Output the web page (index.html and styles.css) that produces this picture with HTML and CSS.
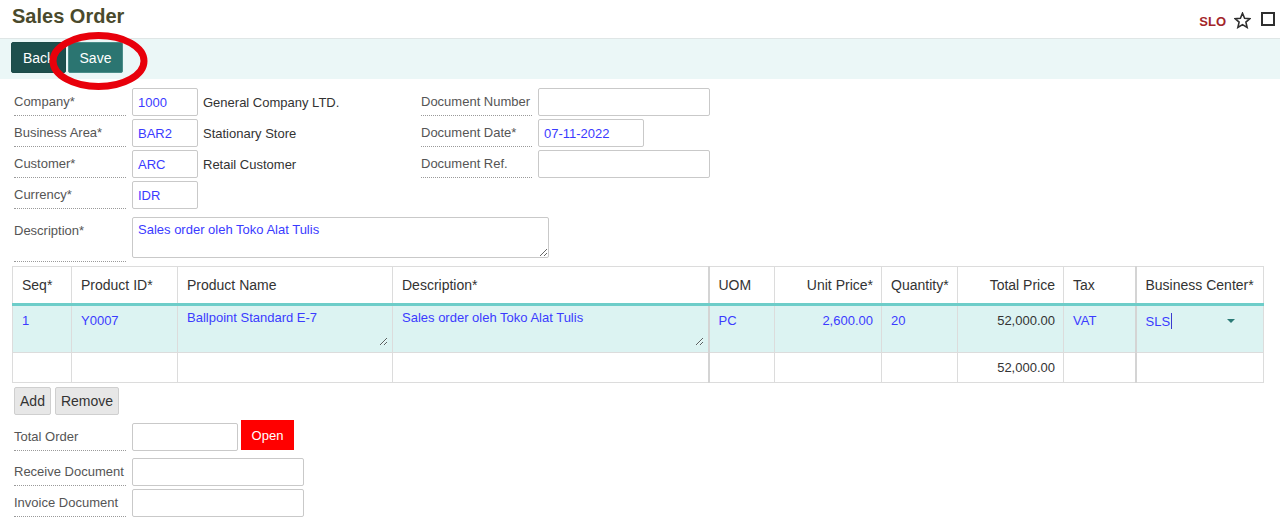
FILE: index.html
```html
<!DOCTYPE html>
<html>
<head>
<meta charset="utf-8">
<title>Sales Order</title>
<link rel="stylesheet" href="styles.css">
</head>
<body>
<div class="page">
  <header class="topbar">
    <h1>Sales Order</h1>
    <div class="tools">
      <span class="code">SLO</span>
      <svg class="star" width="17" height="17" viewBox="0 0 17 17"><polygon points="8.5,1.2 10.6,6.2 15.9,6.6 11.9,10.1 13.1,15.4 8.5,12.6 3.9,15.4 5.1,10.1 1.1,6.6 6.4,6.2" fill="none" stroke="#2f2f2f" stroke-width="1.6" stroke-linejoin="miter"/></svg>
      <span class="box"></span>
    </div>
  </header>

  <div class="toolbar">
    <button class="btn back">Back</button>
    <button class="btn save">Save</button>
    <svg class="mark" width="99" height="60" viewBox="0 0 99 60"><ellipse cx="49.5" cy="30" rx="45.5" ry="25.5" fill="none" stroke="#e8000b" stroke-width="7"/></svg>
  </div>

  <section class="form">
    <div class="cols">
      <div class="col left">
        <div class="row"><label class="lbl">Company*</label><input class="in w66" value="1000"><span class="ref">General Company LTD.</span></div>
        <div class="row"><label class="lbl">Business Area*</label><input class="in w66" value="BAR2"><span class="ref">Stationary Store</span></div>
        <div class="row"><label class="lbl">Customer*</label><input class="in w66" value="ARC"><span class="ref">Retail Customer</span></div>
        <div class="row"><label class="lbl">Currency*</label><input class="in w66" value="IDR"></div>
      </div>
      <div class="col right">
        <div class="row"><label class="lbl lbl-r">Document Number</label><input class="in w172" value=""></div>
        <div class="row"><label class="lbl lbl-r">Document Date*</label><input class="in w106" value="07-11-2022"></div>
        <div class="row"><label class="lbl lbl-r">Document Ref.</label><input class="in w172" value=""></div>
      </div>
    </div>
    <div class="row desc-row"><label class="lbl lbl-tall">Description*</label><textarea class="ta">Sales order oleh Toko Alat Tulis</textarea></div>
  </section>

  <table class="grid">
    <colgroup>
      <col style="width:59px"><col style="width:106px"><col style="width:215px"><col style="width:316px"><col style="width:66px"><col style="width:107px"><col style="width:76px"><col style="width:106px"><col style="width:72px"><col style="width:128px">
    </colgroup>
    <thead>
      <tr>
        <th>Seq*</th><th>Product ID*</th><th>Product Name</th><th>Description*</th><th class="sep">UOM</th><th class="num">Unit Price*</th><th>Quantity*</th><th class="num">Total Price</th><th>Tax</th><th class="sep">Business Center*</th>
      </tr>
    </thead>
    <tbody>
      <tr class="sel">
        <td>1</td>
        <td>Y0007</td>
        <td class="tacell"><textarea class="cell-ta">Ballpoint Standard E-7</textarea></td>
        <td class="tacell"><textarea class="cell-ta">Sales order oleh Toko Alat Tulis</textarea></td>
        <td class="sep">PC</td>
        <td class="num">2,600.00</td>
        <td>20</td>
        <td class="num dark">52,000.00</td>
        <td>VAT</td>
        <td class="sep"><div class="combo"><span>SLS<span class="caret"></span></span><span class="tri"></span></div></td>
      </tr>
      <tr class="foot">
        <td></td><td></td><td></td><td></td><td class="sep"></td><td></td><td></td><td class="num dark">52,000.00</td><td></td><td class="sep"></td>
      </tr>
    </tbody>
  </table>

  <div class="actions">
    <button class="gbtn add">Add</button>
    <button class="gbtn remove">Remove</button>
  </div>

  <section class="bottom">
    <div class="row total-row"><label class="lbl lbl-off">Total Order</label><input class="in w106 in-off" value=""><button class="open">Open</button></div>
    <div class="row"><label class="lbl">Receive Document</label><input class="in w172" value=""></div>
    <div class="row"><label class="lbl">Invoice Document</label><input class="in w172" value=""></div>
  </section>
</div>
</body>
</html>
```

FILE: styles.css
```css
* { box-sizing: border-box; }

body {
  margin: 0;
  background: #fff;
  color: #333;
  font-family: "Liberation Sans", Arial, sans-serif;
}

.page {
  width: 1280px;
  position: relative;
}

/* top header */
.topbar {
  display: flex;
  justify-content: space-between;
  align-items: flex-start;
  height: 38px;
  padding: 0 5px 0 12px;
}

.topbar h1 {
  margin: 4px 0 0;
  font-size: 20px;
  line-height: 24px;
  font-weight: bold;
  color: #4a4a2c;
}

.tools {
  display: flex;
  align-items: flex-start;
  margin-top: 11px;
}

.code {
  margin-top: 3px;
  font-size: 13px;
  line-height: 15px;
  font-weight: bold;
  color: #a3262a;
}

.star {
  margin-left: 8px;
  margin-top: 1px;
}

.box {
  width: 14px;
  height: 14px;
  margin-left: 10px;
  margin-top: 1px;
  border: 2px solid #2f2f2f;
}

/* toolbar */
.toolbar {
  position: relative;
  display: flex;
  gap: 2px;
  height: 41px;
  padding: 3px 0 0 11px;
  background: #ebf7f7;
  border-top: 1px solid #dfe6e6;
}

.btn {
  height: 31px;
  width: 55px;
  border: 1px solid #1c4a48;
  border-radius: 2px;
  color: #fff;
  font-family: "Liberation Sans", Arial, sans-serif;
  font-size: 14px;
  padding: 0;
}

.back { background: #1d4f4d; }
.save { background: #2b7571; border-color: #4a8d89; }

.mark {
  position: absolute;
  left: 49px;
  top: -8px;
}

/* form */
.form {
  padding: 9px 0 0 14px;
}

.cols {
  display: flex;
}

.col.left { width: 407px; }

.row {
  display: flex;
  align-items: flex-start;
  height: 28px;
  margin-bottom: 3px;
}

.lbl {
  width: 112px;
  height: 28px;
  margin-right: 6px;
  padding-top: 6px;
  font-size: 13px;
  line-height: 16px;
  color: #555;
  border-bottom: 1px dotted #9a9a9a;
  white-space: nowrap;
}

.lbl-r { width: 111px; }

.in {
  height: 28px;
  border: 1px solid #c9c9c9;
  border-radius: 2px;
  padding: 0 5px;
  font-family: "Liberation Sans", Arial, sans-serif;
  font-size: 13px;
  color: #3b3bff;
  background: #fff;
  outline: none;
}

.w66 { width: 66px; }
.w106 { width: 106px; }
.w172 { width: 172px; }

.ref {
  margin-left: 5px;
  padding-top: 7px;
  font-size: 13px;
  line-height: 16px;
  color: #333;
}

.desc-row {
  height: 45px;
  margin-top: 5px;
  margin-bottom: 4px;
}

.lbl-tall { height: 45px; }

.ta {
  width: 417px;
  height: 41px;
  border: 1px solid #c9c9c9;
  border-radius: 2px;
  padding: 4px 5px;
  font-family: "Liberation Sans", Arial, sans-serif;
  font-size: 13px;
  line-height: 16px;
  color: #3b3bff;
  resize: both;
  outline: none;
}

/* table */
.grid {
  margin-left: 12px;
  width: 1251px;
  border-collapse: collapse;
  table-layout: fixed;
  border: 1px solid #dcdcdc;
}

.grid th,
.grid td {
  border-left: 1px solid #dcdcdc;
  padding: 0 8px 0 9px;
  text-align: left;
  white-space: nowrap;
  overflow: hidden;
}

.grid th {
  height: 38px;
  font-size: 14px;
  font-weight: normal;
  color: #333;
  border-bottom: 3px solid #6dcdc9;
}

.grid th.num,
.grid td.num { text-align: right; }

.grid .sep { border-left: 2px solid #d4d4d4; }

.grid tr.sel td {
  height: 48px;
  background: #dcf3f2;
  vertical-align: top;
  padding-top: 7px;
  font-size: 13px;
  line-height: 16px;
  color: #3b3bff;
  border-bottom: 1px solid #dcdcdc;
}

.grid tr.sel td.tacell {
  padding: 4px 4px 0 9px;
}

.cell-ta {
  display: block;
  width: 100%;
  height: 36px;
  border: none;
  background: transparent;
  padding: 0;
  font-family: "Liberation Sans", Arial, sans-serif;
  font-size: 13px;
  line-height: 16px;
  color: #3b3bff;
  resize: vertical;
  outline: none;
}

.grid td.dark { color: #333 !important; }

.grid tr.foot td {
  height: 30px;
  font-size: 13px;
  color: #333;
}

.combo {
  display: flex;
  justify-content: space-between;
  align-items: center;
  width: 89px;
  height: 16px;
}

.caret {
  display: inline-block;
  width: 1px;
  height: 16px;
  margin-left: 1px;
  vertical-align: -3px;
  background: #3a3ad0;
}

.tri {
  width: 0;
  height: 0;
  border-left: 4px solid transparent;
  border-right: 4px solid transparent;
  border-top: 4px solid #2b7a76;
}

/* actions */
.actions {
  display: flex;
  gap: 4px;
  padding: 4px 0 0 14px;
}

.gbtn {
  height: 28px;
  padding: 0;
  background: #e7e7e7;
  border: 1px solid #cfcfcf;
  border-radius: 2px;
  font-family: "Liberation Sans", Arial, sans-serif;
  font-size: 14px;
  color: #333;
}

.add { width: 37px; }
.remove { width: 64px; }

/* bottom form */
.bottom {
  padding: 5px 0 0 14px;
}

.total-row {
  height: 31px;
  margin-bottom: 7px;
}

.lbl-off { margin-top: 3px; }
.in-off { margin-top: 3px; }

.open {
  height: 30px;
  width: 53px;
  margin-left: 3px;
  border: none;
  background: #ff0000;
  color: #fff;
  font-family: "Liberation Sans", Arial, sans-serif;
  font-size: 13px;
  padding: 0;
}
```
